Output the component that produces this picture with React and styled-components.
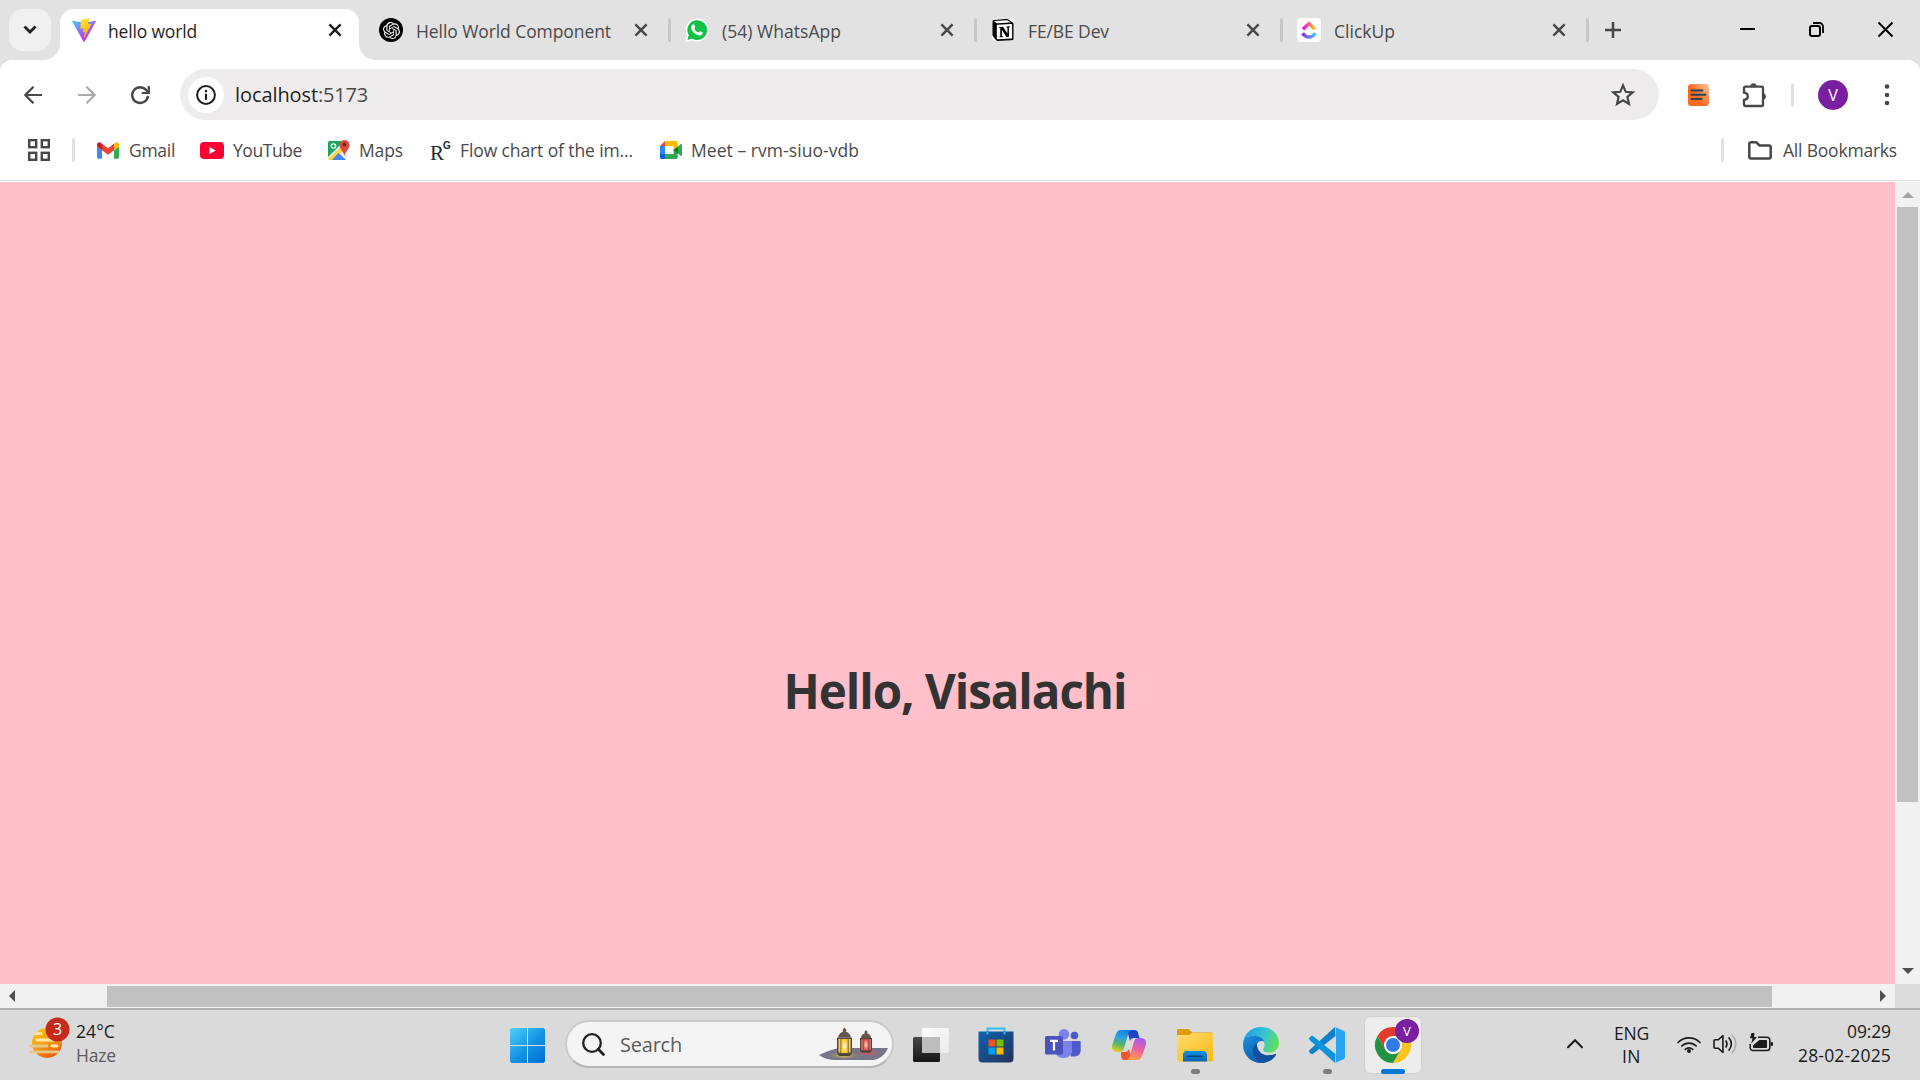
import React, { useLayoutEffect, useRef, useState } from "react";
import styled, { createGlobalStyle, css } from "styled-components";
import { SiOpenai, SiNotion } from "react-icons/si";

const GlobalStyle = createGlobalStyle`
  * { box-sizing: border-box; }
  html, body { margin: 0; padding: 0; overflow: hidden; }
  body { font-family: "Open Sans", "Noto Sans", sans-serif; background: #fff; }
  svg { display: block; flex: none; overflow: visible; }
`;

/* ---------- text fitted to a column width by tracking ---------- */

const Label = styled.span`
  display: block;
  flex: none;
  width: ${(p) => p.$w}px;
  font-size: ${(p) => p.$size || 17.5}px;
  line-height: ${(p) => p.$lh || 24}px;
  color: ${(p) => p.$color || "#4a4a4a"};
  white-space: nowrap;
`;

function FitLabel({ w, size, lh, color, children }) {
  const ref = useRef(null);
  const [spacing, setSpacing] = useState(0);
  useLayoutEffect(() => {
    const natural = ref.current.getBoundingClientRect().width;
    setSpacing((w - natural) / children.length);
  }, [w, children]);
  return (
    <Label $w={w} $size={size} $lh={lh} $color={color}>
      <span ref={ref} style={{ letterSpacing: spacing }}>{children}</span>
    </Label>
  );
}

/* ---------- browser window ---------- */

const Screen = styled.div`
  width: 1920px;
  height: 1080px;
  display: flex;
  flex-direction: column;
  overflow: hidden;
`;

const TabStrip = styled.div`
  height: 60px;
  flex: none;
  display: flex;
  background: #e2e2e2;
  padding-left: 9px;
`;

const TabSearch = styled.div`
  width: 42px;
  height: 42px;
  margin: 9px 9px 0 0;
  border-radius: 14px;
  background: #f0f0f0;
  display: flex;
  align-items: center;
  justify-content: center;
`;

const flare = css`
  content: "";
  position: absolute;
  bottom: 0;
  width: 16px;
  height: 16px;
`;

const Tab = styled.div`
  position: relative;
  width: ${(p) => (p.$active ? 299 : 306)}px;
  height: 51px;
  margin: 9px ${(p) => (p.$active ? 7 : 0)}px 0 0;
  padding: 0 0 9px ${(p) => (p.$active ? 12 : 13)}px;
  display: flex;
  align-items: center;
  background: ${(p) => (p.$active ? "#fff" : "transparent")};
  border-radius: 14px 14px 0 0;
  ${(p) =>
    p.$active &&
    css`
      &::before {
        ${flare}
        left: -16px;
        background: radial-gradient(circle at 0 0, transparent 15.5px, #fff 16px);
      }
      &::after {
        ${flare}
        right: -16px;
        background: radial-gradient(circle at 100% 0, transparent 15.5px, #fff 16px);
      }
    `}
`;

const Favicon = styled.div`
  width: 24px;
  height: 24px;
  flex: none;
  display: flex;
  align-items: center;
  justify-content: center;
  border-radius: ${(p) => (p.$round ? "50%" : p.$tile ? "4px" : 0)};
  background: ${(p) => (p.$round ? "#000" : p.$tile ? "#fff" : "transparent")};
  color: #fff;
`;

const TabTitle = styled.div`
  width: ${(p) => (p.$active ? 226.5 : 225.5)}px;
  flex: none;
  padding: 2px 0 0 ${(p) => (p.$active ? 12 : 13)}px;
`;

const CloseBox = styled.div`
  width: 24px;
  flex: none;
  display: flex;
  justify-content: center;
`;

const Divider = styled.div`
  width: 3px;
  height: 24px;
  flex: none;
  border-radius: 2px;
  background: ${(p) => p.$color || "#e2e2e2"};
  margin-left: ${(p) => p.$ml || 0}px;
`;

const NewTab = styled.div`
  width: 48px;
  height: 60px;
  display: flex;
  align-items: center;
  justify-content: center;
  margin-left: -1px;
`;

const WindowControls = styled.div`
  display: flex;
  align-items: center;
  height: 58px;
  margin-left: auto;
`;

const ControlButton = styled.div`
  width: 69px;
  display: flex;
  justify-content: center;
`;

const ToolbarBacking = styled.div`
  background: #e2e2e2;
  flex: none;
`;

const ChromePanel = styled.div`
  height: 122px;
  background: #fff;
  border-radius: 12px 12px 0 0;
  border-bottom: 1px solid #fff;
  display: flex;
  flex-direction: column;
`;

const Toolbar = styled.div`
  display: flex;
  align-items: center;
  height: 51px;
  flex: none;
  margin-top: 9px;
  padding-left: 21px;
`;

const NavButton = styled.div`
  width: 24px;
  margin-right: 30px;
  color: ${(p) => (p.$muted ? "#ababab" : "#474747")};
`;

const Omnibox = styled.div`
  width: 1479px;
  height: 51px;
  border-radius: 26px;
  background: #efeced;
  display: flex;
  align-items: center;
  margin-left: -3px;
  padding: 0 24px 0 8px;
`;

const InfoChip = styled.div`
  width: 36px;
  height: 36px;
  border-radius: 50%;
  background: #fff;
  display: flex;
  align-items: center;
  justify-content: center;
  margin-right: 11px;
`;

const Spacer = styled.div`
  flex: 1;
`;

const ToolbarActions = styled.div`
  display: flex;
  align-items: center;
`;

const Slot = styled.div`
  margin-left: ${(p) => p.$ml}px;
  flex: none;
`;

const Avatar = styled.div`
  width: ${(p) => p.$size}px;
  height: ${(p) => p.$size}px;
  border-radius: 50%;
  background: #7b1fa2;
  color: #fff;
  display: flex;
  align-items: center;
  justify-content: center;
  font-size: ${(p) => p.$font}px;
  font-weight: 400;
  line-height: 1;
`;

const BookmarkBar = styled.div`
  display: flex;
  align-items: center;
  height: 61px;
  flex: none;
  padding-left: 28px;
  border-bottom: 1px solid #dcdfde;
`;

const Bookmark = styled.div`
  display: flex;
  align-items: center;
  margin-left: ${(p) => p.$ml}px;
  gap: ${(p) => p.$gap}px;
`;

const BookmarkText = styled.div`
  padding-bottom: 1px;
`;

const RgMark = styled.div`
  display: flex;
  width: 20px;
  height: 22px;
  font-family: "Liberation Serif", serif;
  font-size: 21px;
  line-height: 28px;
  letter-spacing: -1px;
  color: #1c2b29;
  sup {
    font-size: 10px;
    line-height: 13px;
    font-family: "Liberation Sans", sans-serif;
    font-weight: 700;
    vertical-align: top;
  }
`;

/* ---------- page and scrollbars ---------- */

const Viewport = styled.div`
  height: 826px;
  flex: none;
  display: grid;
  grid-template-columns: 1895px 25px;
  grid-template-rows: 802px 24px;
`;

const Page = styled.main`
  background: #ffc0cb;
  display: flex;
  justify-content: center;
  padding: 476px 0 0 15px;
`;

const Heading = styled.h1`
  margin: 0;
  line-height: 66px;
  font-size: 47.5px;
  font-weight: 700;
  letter-spacing: ${(p) => p.$tracking}px;
  color: #333;
  white-space: nowrap;
`;

const VScroll = styled.div`
  background: #f1f1f1;
  display: flex;
  flex-direction: column;
  align-items: center;
  padding: 10px 0;
`;

const VThumb = styled.div`
  width: 21px;
  height: 595px;
  margin: 9px 0 auto;
  background: #c1c1c1;
`;

const HScroll = styled.div`
  background: #f1f1f1;
  display: flex;
  align-items: center;
  padding: 0 9px;
`;

const HThumb = styled.div`
  width: 1665px;
  height: 21px;
  margin: 0 auto 0 92px;
  background: #c1c1c1;
`;

const Corner = styled.div`
  background: #dcdcdc;
`;

/* ---------- taskbar ---------- */

const Taskbar = styled.footer`
  height: 72px;
  flex: none;
  border-top: 2px solid #b0b0b0;
  background: #dadada;
  display: flex;
`;

const Weather = styled.div`
  width: 494px;
  height: 70px;
  padding-left: 28px;
  display: flex;
`;

const WeatherIcon = styled.div`
  width: 48px;
  padding-top: 7px;
`;

const WeatherText = styled.div`
  padding-top: 9px;
`;

const AppCell = styled.div`
  width: 66px;
  height: 70px;
  flex: none;
  display: flex;
  flex-direction: column;
  align-items: center;
  padding-top: 6px;
`;

const AppTile = styled.div`
  position: relative;
  width: 58px;
  height: 58px;
  border-radius: 7px;
  display: flex;
  align-items: center;
  justify-content: center;
  border: ${(p) => (p.$active ? "1px solid #d0d0d0" : "1px solid transparent")};
  background: ${(p) => (p.$active ? "#ededed" : "transparent")};
`;

const Indicator = styled.div`
  position: absolute;
  bottom: -1px;
  left: 50%;
  width: ${(p) => (p.$wide ? 24 : 9)}px;
  height: 5px;
  margin-left: ${(p) => (p.$wide ? -12 : -4.5)}px;
  border-radius: 3px;
  background: ${(p) => (p.$wide ? "#0078d4" : "#7c7c7c")};
`;

const ProfileBadge = styled.div`
  position: absolute;
  right: 2px;
  top: 2px;
`;

const SearchBox = styled.div`
  width: 329px;
  height: 48px;
  margin: 10px 4px 0 5px;
  border: 2px solid #cbcbcb;
  border-bottom-color: #b5b5b5;
  border-radius: 24px;
  background: #f4f4f4;
  display: flex;
  align-items: center;
  padding-left: 15px;
  overflow: hidden;
`;

const SearchText = styled.div`
  margin-left: 15px;
  padding-top: 2px;
`;

const Tray = styled.div`
  display: flex;
  margin-left: auto;
  padding-right: 29px;
  height: 70px;
`;

const TrayItem = styled.div`
  margin-right: ${(p) => p.$mr}px;
  padding-top: ${(p) => p.$pt}px;
`;

const Stack = styled.div`
  display: flex;
  flex-direction: column;
  align-items: ${(p) => p.$align};
  padding-top: ${(p) => p.$pt}px;
  margin-right: ${(p) => p.$mr || 0}px;
`;

/* ---------- drawings ---------- */

const Svg = ({ w, h = w, vb, children }) => (
  <svg width={w} height={h} viewBox={vb || `0 0 ${w} ${h}`} fill="none">{children}</svg>
);

const CloseIcon = ({ color = "#474747", size = 12, sw = 2.4 }) => (
  <Svg w={size} vb="0 0 12 12"><path d="M.4.4l11.2 11.2M11.6.4L.4 11.6" stroke={color} strokeWidth={sw} /></Svg>
);

const ViteIcon = () => (
  <Svg w={24} vb="0 0 256 257">
    <defs>
      <linearGradient id="va" x1="0" y1="0" x2=".58" y2=".78"><stop offset="0" stopColor="#41D1FF" /><stop offset="1" stopColor="#BD34FE" /></linearGradient>
      <linearGradient id="vb" x1=".4" y1="0" x2=".5" y2="1"><stop offset="0" stopColor="#FFEA83" /><stop offset=".1" stopColor="#FFDD35" /><stop offset="1" stopColor="#FFA800" /></linearGradient>
    </defs>
    <path fill="url(#va)" d="M255.153 37.938L134.897 252.976c-2.483 4.44-8.862 4.466-11.382.048L.875 37.958c-2.746-4.814 1.371-10.646 6.827-9.67l120.385 21.517a6.537 6.537 0 0 0 2.322-.004l117.867-21.483c5.438-.991 9.574 4.796 6.877 9.62Z" />
    <path fill="url(#vb)" d="M185.432.063L96.44 17.501a3.268 3.268 0 0 0-2.634 3.014l-5.474 92.456a3.268 3.268 0 0 0 3.997 3.378l24.777-5.718c2.318-.535 4.413 1.507 3.936 3.838l-7.361 36.047c-.495 2.426 1.782 4.5 4.151 3.78l15.304-4.649c2.372-.72 4.652 1.36 4.15 3.788l-11.698 56.621c-.732 3.542 3.979 5.473 5.943 2.437l1.313-2.028l72.516-144.72c1.215-2.423-.88-5.186-3.54-4.672l-25.505 4.922c-2.396.462-4.435-1.77-3.759-4.114l16.646-57.705c.677-2.35-1.37-4.583-3.769-4.113Z" />
  </Svg>
);

const WhatsAppIcon = () => (
  <Svg w={24} vb="1 .5 23 23">
    <path d="M2.2 22.6L3.8 17A10.2 10.2 0 1 1 7.8 21Z" fill="#11c144" stroke="#fff" strokeWidth="1.5" strokeLinejoin="round" />
    <path d="M8.4 6.7c.5-.5 1.2-.3 1.5.3l.9 2c.2.5-.8 1.4-.9 1.8.9 1.8 2.2 3 4 3.7.6-.3 1.2-1.5 1.7-1.3l2.1 1c.5.3.4.9.1 1.5-.6 1.2-2.2 1.9-3.7 1.5-3.8-1-6.2-3.5-7.1-6.6-.4-1.5.4-3 1.4-3.9z" fill="#fff" />
  </Svg>
);

const ClickUpIcon = () => (
  <Svg w={24}>
    <defs>
      <linearGradient id="cu1" x1="0" x2="1"><stop stopColor="#ff02f0" /><stop offset="1" stopColor="#ffc800" /></linearGradient>
      <linearGradient id="cu2" x1="0" x2="1"><stop stopColor="#8930fd" /><stop offset="1" stopColor="#49ccf9" /></linearGradient>
    </defs>
    <path d="M6 11.200L12 5.600l6 5.600" stroke="url(#cu1)" strokeWidth="3.400" />
    <path d="M5.600 15.300c3.400 5 9.400 5 12.800 0" stroke="url(#cu2)" strokeWidth="3.400" />
  </Svg>
);

const BackIcon = () => (
  <Svg w={24}><path d="M21 12H4.500M12.500 3.800L4.300 12l8.200 8.200" stroke="currentColor" strokeWidth="2.200" /></Svg>
);
const ForwardIcon = () => (
  <Svg w={24}><path d="M3 12h16.500M11.500 3.800l8.200 8.200-8.200 8.200" stroke="currentColor" strokeWidth="2.200" /></Svg>
);
const ReloadIcon = () => (
  <Svg w={24}>
    <path d="M19 12.800A7.900 7.900 0 1 1 17.400 7.300L19 9" stroke="currentColor" strokeWidth="2.400" />
    <path d="M19.800 3v7h-7" stroke="currentColor" strokeWidth="2.200" />
  </Svg>
);

const AppsIcon = () => (
  <Svg w={22}>
    {[[1.2, 1.2], [13.8, 1.2], [1.2, 13.8], [13.8, 13.8]].map(([x, y]) => (
      <rect key={`${x}-${y}`} x={x} y={y} width="7" height="7" stroke="#474747" strokeWidth="2.400" />
    ))}
  </Svg>
);

const GmailIcon = () => (
  <Svg w={22} h={17} vb="52 42 88 66">
    <path fill="#4285f4" d="M58 108h14V74L52 59v43c0 3.320 2.690 6 6 6" />
    <path fill="#34a853" d="M120 108h14c3.320 0 6-2.690 6-6V59l-20 15" />
    <path fill="#fbbc04" d="M120 48v26l20-15v-8c0-7.420-8.470-11.650-14.400-7.200" />
    <path fill="#ea4335" d="M72 74V48l24 18 24-18v26L96 92" />
    <path fill="#c5221f" d="M52 51v8l20 15V48l-5.600-4.200c-5.940-4.450-14.400-.22-14.400 7.200" />
  </Svg>
);

const YouTubeIcon = () => (
  <Svg w={24} h={17}><rect width="24" height="17" rx="4" fill="#ff0033" /><path d="M9.500 5l6.300 3.500L9.500 12z" fill="#fff" /></Svg>
);

const MapsIcon = () => (
  <Svg w={22}>
    <defs><clipPath id="mp"><rect x="0" y="2" width="19" height="19" rx="2" /></clipPath></defs>
    <g clipPath="url(#mp)">
      <rect width="20" height="22" fill="#e8eaed" />
      <path d="M0 2h16L0 18z" fill="#1fa463" />
      <path d="M0 20L17 4l3 3L4 22H0z" fill="#fdd43c" />
      <path d="M3 22l7.500-8L19 22z" fill="#4285f4" />
    </g>
    <circle cx="5.500" cy="7" r="2.200" stroke="#fff" strokeWidth="1.200" />
    <path d="M16.500 17c-.5-4.500-5-6.400-5-11a5 5 0 0 1 10 0c0 4.600-4.500 6.500-5 11z" fill="#dd4b3e" />
    <circle cx="16.500" cy="5.500" r="1.900" fill="#7d1f17" />
  </Svg>
);

const MeetIcon = () => (
  <Svg w={22} h={18}>
    <path d="M5 0v5H0z" fill="#ea4335" />
    <path d="M5 0h11c1 0 1.800.8 1.800 1.800V7l-4.200 3V5H5z" fill="#ffba00" />
    <path d="M0 5h5v8H0z" fill="#2684fc" />
    <path d="M0 13h5v5H1.500C.7 18 0 17.300 0 16.500z" fill="#0066da" />
    <path d="M5 13h8.600V8l4.200 3v5.200c0 1-.8 1.800-1.800 1.800H5z" fill="#34a853" />
    <path d="M13.600 9L21 3c.500-.3 1 0 1 .6v10.800c0 .6-.5.9-1 .6z" fill="#34a853" />
    <path d="M13.600 9l4.400-3.600v7.200z" fill="#00832d" />
  </Svg>
);

const FolderIcon = () => (
  <Svg w={24} h={19}><path d="M1.300 3.300c0-1.100.9-2 2-2h5l3.200 3.200h9.200c1.100 0 2 .9 2 2v8.900c0 1.100-.9 2-2 2H3.300c-1.100 0-2-.9-2-2z" stroke="#474747" strokeWidth="2.500" /></Svg>
);

const StarIcon = () => (
  <Svg w={24} h={24}><path d="M12 2.300l2.700 6.500 7 .6-5.300 4.600 1.600 6.900-6-3.700L6 20.900 7.600 14 2.300 9.400l7-.6z" stroke="#474747" strokeWidth="2.200" /></Svg>
);

const NotesExtension = () => (
  <Svg w={21} h={22}>
    <defs><linearGradient id="ne" x1=".35" y1=".5" x2="1" y2="0"><stop stopColor="#fa6a1f" /><stop offset="1" stopColor="#fdc6a3" /></linearGradient></defs>
    <rect width="21" height="22" rx="3" fill="url(#ne)" />
    <path d="M3.500 6.500h11M3.500 10.700h14M3.500 15h10" stroke="#2c4354" strokeWidth="2" strokeLinecap="round" />
  </Svg>
);

const PuzzleIcon = () => (
  <Svg w={26} h={26}>
    <path d="M2 6.200c0-.9.600-1.500 1.500-1.500h16c.9 0 1.500.6 1.500 1.500V22.500c0 .9-.6 1.500-1.500 1.500h-16C2.600 24 2 23.400 2 22.500V18c2.800-.3 3.800-1.900 3.800-3.700S4.800 10.900 2 10.600z" stroke="#474747" strokeWidth="2.300" />
    <path d="M8.500 4.300a3 3 0 0 1 6 0zM21.500 11.300a3.200 3.200 0 0 1 0 6.200z" fill="#474747" />
  </Svg>
);

const HazeIcon = () => (
  <Svg w={42} h={44}>
    <defs><linearGradient id="hz" x1=".2" y1="0" x2=".7" y2="1"><stop stopColor="#fcc40c" /><stop offset=".5" stopColor="#f39c12" /><stop offset="1" stopColor="#e8590c" /></linearGradient></defs>
    <circle cx="19" cy="26" r="15" fill="url(#hz)" />
    <path d="M8 16.700h5M9 23h16M24 29h5" stroke="#ffe9a8" strokeWidth="2.800" strokeLinecap="round" />
    <path d="M2 29h17M2 34.800h28" stroke="#e5c88a" strokeWidth="2.800" strokeLinecap="round" />
    <circle cx="29.500" cy="12.500" r="12" fill="#c42b1c" />
    <text x="29.500" y="18" textAnchor="middle" fontSize="16" fill="#fff" fontFamily="Open Sans, sans-serif">3</text>
  </Svg>
);

const StartIcon = () => (
  <Svg w={35}>
    <defs><linearGradient id="st" gradientUnits="userSpaceOnUse" x1="0" y1="0" x2="32" y2="35"><stop stopColor="#4fd2fc" /><stop offset=".55" stopColor="#1593e4" /><stop offset="1" stopColor="#0071d4" /></linearGradient></defs>
    <path d="M1.500 0H17v17H0V1.500zM18 0h15.500L35 1.500V17H18zM0 18h17v17H1.500L0 33.500zM18 18h17v15.500L33.500 35H18z" fill="url(#st)" />
  </Svg>
);

const SearchGlass = () => (
  <Svg w={23}><circle cx="10" cy="10" r="8.800" stroke="#1f1f1f" strokeWidth="2.300" /><path d="M16.300 16.300l5.200 5.200" stroke="#1f1f1f" strokeWidth="2.800" strokeLinecap="round" /></Svg>
);

const Lantern = ({ x, y, s, glow, core }) => (
  <g transform={`translate(${x} ${y}) scale(${s})`}>
    <path d="M7.500 0l2 2.500-.6 1.700c3 .8 4.600 3 5 5.800H1.100c.4-2.800 2-5 5-5.800l-.6-1.700z" fill="#65564c" />
    <rect x="0" y="10" width="15" height="16" fill="#5a4636" />
    <rect x="1.500" y="11.500" width="2" height="13.500" fill={glow} />
    <rect x="4.200" y="11.500" width="6.600" height="14" fill={core} />
    <rect x="11.600" y="11.500" width="2" height="13.500" fill={glow} />
    <path d="M.5 26h14v1l-2 1.500h-10L.5 27z" fill="#514337" />
  </g>
);

const LanternArt = () => (
  <Svg w={73} h={34}>
    <defs>
      <radialGradient id="lg"><stop stopColor="#e7cc3c" /><stop offset="1" stopColor="#77758a" stopOpacity="0" /></radialGradient>
      <radialGradient id="lr"><stop stopColor="#e05560" /><stop offset="1" stopColor="#77758a" stopOpacity="0" /></radialGradient>
      <radialGradient id="cy"><stop stopColor="#fffbe0" /><stop offset="1" stopColor="#f9c42b" /></radialGradient>
      <radialGradient id="cr"><stop stopColor="#fbd9b0" /><stop offset="1" stopColor="#dc4d56" /></radialGradient>
    </defs>
    <path d="M0 28c6-2.500 12-6 22-7h47c-3 7-8 11-15 12H15C9 32.500 4 31 0 28z" fill="#77758a" />
    <ellipse cx="25" cy="28.500" rx="19" ry="4.500" fill="url(#lg)" />
    <ellipse cx="49" cy="26" rx="18" ry="4" fill="url(#lr)" />
    <Lantern x={18} y={0.5} s={1} glow="#fbd148" core="url(#cy)" />
    <Lantern x={41} y={3} s={0.8} glow="#e26a68" core="url(#cr)" />
  </Svg>
);

const TaskViewIcon = () => (
  <Svg w={36} h={34}>
    <defs>
      <linearGradient id="tv" x1="0" y1="0" x2="0" y2="1"><stop stopColor="#474747" /><stop offset="1" stopColor="#161616" /></linearGradient>
      <linearGradient id="tw" x1="0" y1="0" x2="1" y2="1"><stop stopColor="#fff" /><stop offset="1" stopColor="#ececec" /></linearGradient>
    </defs>
    <rect x="0" y="9" width="27" height="25" rx="1.500" fill="url(#tv)" />
    <rect x="9" y="0" width="27" height="25" rx="1" fill="url(#tw)" opacity=".92" />
    <path d="M9 9h18v16H9z" fill="#bdbdbd" />
  </Svg>
);

const StoreIcon = () => (
  <Svg w={36} h={35} vb="0.500 0.500 36 35">
    <defs><linearGradient id="ms" x1="0" y1="0" x2="1" y2="1"><stop stopColor="#0e62b0" /><stop offset="1" stopColor="#25335a" /></linearGradient></defs>
    <path d="M9 6V1h17v5" stroke="#2fc0ee" strokeWidth="2" />
    <path d="M0 4h35v27a4 4 0 0 1-4 4H4a4 4 0 0 1-4-4z" fill="url(#ms)" />
    <path d="M9 7V4M26 7V4" stroke="#2fb0e6" strokeWidth="2" />
    <path d="M10 12h7v7h-7z" fill="#f25022" /><path d="M18 12h7v7h-7z" fill="#7fba00" />
    <path d="M10 20h7v7h-7z" fill="#00a4ef" /><path d="M18 20h7v7h-7z" fill="#ffb900" />
  </Svg>
);

const TeamsIcon = () => (
  <Svg w={36} h={32}>
    <circle cx="29.500" cy="6.500" r="3.800" fill="#5059c9" />
    <path d="M22 12h12.500c.8 0 1.200.5 1.200 1.200v8.300a6 6 0 0 1-6 6H26z" fill="#5059c9" />
    <circle cx="19" cy="5.300" r="5.300" fill="#7b83eb" />
    <path d="M10 12h15.500c1 0 1.500.6 1.500 1.500V23a9 9 0 0 1-17 0z" fill="#7b83eb" />
    <rect x="0" y="7" width="18" height="18.500" rx="1.500" fill="#4b53bc" />
    <path d="M5 11.800h8M9 11.800V21.500" stroke="#fff" strokeWidth="2.200" />
  </Svg>
);

const CopilotIcon = () => (
  <Svg w={34} h={30}>
    <defs>
      <linearGradient id="c1" x1=".5" y1="0" x2=".3" y2="1"><stop stopColor="#1583e8" /><stop offset=".35" stopColor="#2aa6d8" /><stop offset=".65" stopColor="#58b368" /><stop offset="1" stopColor="#f1cf1c" /></linearGradient>
      <linearGradient id="c2" x1=".7" y1="0" x2=".4" y2="1"><stop stopColor="#a35bf0" /><stop offset=".5" stopColor="#ea5fa2" /><stop offset="1" stopColor="#fba04e" /></linearGradient>
    </defs>
    <path d="M15 0h7.500c2 0 3 .9 3.500 2.700L27.500 8H22c-2 0-3.500 1-4 3z" fill="#1a45c8" />
    <path d="M9 22h4c2 0 3-.9 3.500-3l4 9c-.6 1.400-1.600 2-3.500 2h-4.500c-2 0-2.800-.9-3.300-2.700z" fill="#f0562f" />
    <path d="M9.500 0H19c-1.500.8-2.200 2-2.800 4L12 18.500c-.7 2.400-1.800 3.500-4.500 3.500H5c-4 0-6-3-4.600-7.500L3.800 4.500C4.900 1.300 6.500 0 9.500 0z" fill="url(#c1)" />
    <path d="M24.500 30H15c1.500-.8 2.200-2 2.800-4L22 11.500C22.700 9.100 23.800 8 26.500 8H29c4 0 6 3 4.600 7.500l-3.400 10c-1.100 3.200-2.700 4.500-5.700 4.500z" fill="url(#c2)" />
  </Svg>
);

const ExplorerIcon = () => (
  <Svg w={36} h={33}>
    <defs>
      <linearGradient id="ex" x1="0" y1="0" x2="1" y2="1"><stop stopColor="#ffdc6e" /><stop offset="1" stopColor="#fbb916" /></linearGradient>
      <linearGradient id="ey" x1="0" y1="0" x2="0" y2="1"><stop stopColor="#1393e0" /><stop offset="1" stopColor="#0b62b3" /></linearGradient>
    </defs>
    <path d="M0 1.500C0 .6.600 0 1.500 0h9.300c.7 0 1.200.2 1.700.7L15 3.500h19.500c.9 0 1.500.6 1.500 1.500v10H0z" fill="#dc9b08" />
    <path d="M0 7.500C0 6.600.6 6 1.500 6h10L15 4h19.500c.9 0 1.500.6 1.500 1.500v25c0 1.300-.7 2-2 2H2c-1.300 0-2-.7-2-2z" fill="url(#ex)" />
    <path d="M6 32.500V26c0-2.400 1.300-4 4-4h16c2.700 0 4 1.600 4 4v6.500z" fill="url(#ey)" />
    <path d="M11 27.300h14" stroke="#08467f" strokeWidth="1.600" strokeLinecap="round" />
  </Svg>
);

const EdgeIcon = () => (
  <Svg w={36} h={36}>
    <defs>
      <linearGradient id="e1" x1="0" y1=".3" x2="1" y2=".6"><stop stopColor="#1b9de2" /><stop offset=".5" stopColor="#35c1d8" /><stop offset="1" stopColor="#63e258" /></linearGradient>
      <linearGradient id="e2" x1="0" y1="0" x2=".6" y2="1"><stop stopColor="#1a8fdc" /><stop offset="1" stopColor="#0b5cab" /></linearGradient>
    </defs>
    <path d="M0 17C.5 7 8 0 18 0c11 0 18 7.500 18 16 0 6-4.500 9.500-9.500 9.500-4 0-6.500-1.300-6.500-2.800 0-1 1.600-1.900 1.600-4.700C21.600 12 16 8.500 10 8.500 5.500 8.500 1.500 12 0 17z" fill="url(#e1)" />
    <path d="M0 18C0 12 4.500 8.500 10.500 8.500c5 0 9.500 2.500 10.700 6-4.700-1.500-8.200 1.500-8.200 6.500 0 8 7 12.500 13 11.500C23.700 35 21 36 18 36 8 36 0 28 0 18z" fill="url(#e2)" />
    <path d="M13.700 16.500C11 18 10 21 10 24c0 6 4 11 10 12 5.500-.3 10.500-3.500 13-8 .5-1-.4-1.500-1.200-1.100-8 3.600-17.500.4-18.100-10.400z" fill="#10509c" />
  </Svg>
);

const CodeIcon = () => (
  <Svg w={36} h={36}>
    <path d="M26.500 9L4.200 26.800c-.7.600-1.600.6-2.200 0L.6 25.400c-.8-.7-.8-1.700 0-2.400L26 0z" fill="#0f80cc" />
    <path d="M26.500 27L4.200 9.200c-.7-.6-1.600-.6-2.200 0L.6 10.600c-.8.700-.8 1.700 0 2.400L26 36z" fill="#0b93dc" />
    <path d="M26 0l8.500 3.700c1 .5 1.500 1.200 1.500 2.200v24.200c0 1-.5 1.700-1.500 2.200L26 36c1-.7 1-1.500 1-2.500v-31C27 1.500 27 .7 26 0z" fill="#27a4f2" />
  </Svg>
);

const ChromeIcon = () => (
  <Svg w={36} h={36}>
    <path d="M2.410 9L10.200 22.500 18 9h15.590A18 18 0 0 0 2.410 9z" fill="#e33b2e" />
    <path d="M18 36l7.800-13.500A9 9 0 0 0 18 9h15.590A18 18 0 0 1 18 36z" fill="#fcc31e" />
    <path d="M18 36A18 18 0 0 1 2.410 9L10.200 22.500A9 9 0 0 0 25.800 22.500z" fill="#229342" />
    <circle cx="18" cy="18" r="9" fill="#fff" />
    <circle cx="18" cy="18" r="7" fill="#2f7bea" />
  </Svg>
);

const WifiIcon = () => (
  <Svg w={24} h={18}>
    <path d="M1 7.500a15.500 15.500 0 0 1 22 0M4.800 11a10.300 10.300 0 0 1 14.400 0M8.300 14.300a5.300 5.300 0 0 1 7.400 0" stroke="#1b1b1b" strokeWidth="1.700" strokeLinecap="round" />
    <circle cx="12" cy="16" r="2" fill="#1b1b1b" />
  </Svg>
);

const SpeakerIcon = () => (
  <Svg w={24} h={20}>
    <path d="M1 6.800c0-.7.400-1 1-1h3.200l4.700-4.300v17l-4.700-4.300H2c-.6 0-1-.4-1-1z" stroke="#1b1b1b" strokeWidth="1.600" strokeLinejoin="round" />
    <path d="M13 7c1.300 2 1.300 4 0 6M16 3.800c3 4 3 8.400 0 12.400" stroke="#1b1b1b" strokeWidth="1.600" strokeLinecap="round" />
    <path d="M19 1c5 5.500 5 12.500 0 18" stroke="#ababab" strokeWidth="1.500" strokeLinecap="round" />
  </Svg>
);

const BatteryIcon = () => (
  <Svg w={24} h={19}>
    <path d="M9 4.200h9c1.700 0 2.800 1.100 2.800 2.800v7.700c0 1.700-1.100 2.800-2.800 2.800H4c-1.700 0-2.800-1.100-2.800-2.800V11" stroke="#1b1b1b" strokeWidth="1.500" />
    <path d="M10.500 7H17c.6 0 1 .4 1 1v6c0 .6-.4 1-1 1H5c-.6 0-1-.4-1-1v-1.500L8 9z" fill="#1b1b1b" />
    <path d="M21.500 8.700l2.500.8v3l-2.500.8z" fill="#1b1b1b" />
    <path d="M5.500 0h-3L1 5.200h2.500L2.300 10.500 8 4H5z" fill="#1b1b1b" />
  </Svg>
);

/* ---------- data ---------- */

const tabs = [
  { title: "hello world", w: 89, icon: <ViteIcon />, active: true },
  { title: "Hello World Component", w: 195, icon: <SiOpenai size={17} />, round: true, divider: true },
  { title: "(54) WhatsApp", w: 119, icon: <WhatsAppIcon />, divider: true },
  { title: "FE/BE Dev", w: 81, icon: <SiNotion size={22} color="#000" style={{ background: "#fff", borderRadius: 4 }} />, divider: true },
  { title: "ClickUp", w: 61, icon: <ClickUpIcon />, tile: true, divider: true },
];

const bookmarks = [
  { title: "Gmail", w: 46, ml: 22, gap: 10, icon: <GmailIcon /> },
  { title: "YouTube", w: 69, ml: 25, gap: 9, icon: <YouTubeIcon /> },
  { title: "Maps", w: 44, ml: 26, gap: 9, icon: <MapsIcon /> },
  { title: "Flow chart of the im...", w: 173, ml: 27, gap: 10, icon: <RgMark>R<sup>G</sup></RgMark> },
  { title: "Meet – rvm-siuo-vdb", w: 168, ml: 27, gap: 9, icon: <MeetIcon /> },
];

const apps = [
  { id: "view", icon: <TaskViewIcon /> },
  { id: "store", icon: <StoreIcon /> },
  { id: "teams", icon: <TeamsIcon /> },
  { id: "copilot", icon: <CopilotIcon /> },
  { id: "files", icon: <ExplorerIcon />, running: true },
  { id: "edge", icon: <EdgeIcon /> },
  { id: "code", icon: <CodeIcon />, running: true },
  { id: "chrome", icon: <ChromeIcon />, running: true, active: true },
];

export default function App() {
  return (
    <Screen>
      <GlobalStyle />
      <TabStrip>
        <TabSearch>
          <Svg w={14} h={10}><path d="M1.500 1.500L7 7l5.500-5.500" stroke="#1f1f1f" strokeWidth="2.800" /></Svg>
        </TabSearch>
        {tabs.map((t) => (
          <Tab key={t.title} $active={t.active}>
            <Favicon $round={t.round} $tile={t.tile}>{t.icon}</Favicon>
            <TabTitle $active={t.active}>
              <FitLabel w={t.w} color={t.active ? "#1f1f1f" : undefined}>{t.title}</FitLabel>
            </TabTitle>
            <CloseBox><CloseIcon color={t.active ? "#1f1f1f" : "#474747"} /></CloseBox>
            {t.divider && <Divider $color="#c6c6c6" $ml={15.5} />}
          </Tab>
        ))}
        <NewTab>
          <Svg w={16}><path d="M8 0v16M0 8h16" stroke="#474747" strokeWidth="2.500" /></Svg>
        </NewTab>
        <WindowControls>
          <ControlButton><Svg w={15} h={2}><path d="M0 1h15" stroke="#000" strokeWidth="2" /></Svg></ControlButton>
          <ControlButton>
            <Svg w={15}>
              <rect x="1" y="4" width="10" height="10" rx="2" stroke="#000" strokeWidth="2" />
              <path d="M4 1h6.500A3.500 3.500 0 0 1 14 4.500V11" stroke="#000" strokeWidth="1.800" />
            </Svg>
          </ControlButton>
          <ControlButton><CloseIcon color="#000" size={15} sw={1.5} /></ControlButton>
        </WindowControls>
      </TabStrip>

      <ToolbarBacking>
        <ChromePanel>
          <Toolbar>
            <NavButton><BackIcon /></NavButton>
            <NavButton $muted><ForwardIcon /></NavButton>
            <NavButton><ReloadIcon /></NavButton>
            <Omnibox>
              <InfoChip>
                <Svg w={20}>
                  <circle cx="10" cy="10" r="8.900" stroke="#1f1f1f" strokeWidth="2" />
                  <path d="M10 8.800v6M10 5v2.300" stroke="#1f1f1f" strokeWidth="2.200" />
                </Svg>
              </InfoChip>
              <FitLabel w={83} size={20} color="#1f1f1f">localhost</FitLabel>
              <FitLabel w={50} size={20}>:5173</FitLabel>
              <Spacer />
              <StarIcon />
            </Omnibox>
            <ToolbarActions>
              <Slot $ml={29}><NotesExtension /></Slot>
              <Slot $ml={33}><PuzzleIcon /></Slot>
              <Divider $ml={23} />
              <Slot $ml={24}><Avatar $size={30} $font={16}>V</Avatar></Slot>
              <Slot $ml={36}>
                <Svg w={6} h={24}>
                  {[3.5, 12, 20].map((y) => <circle key={y} cx="3" cy={y} r="2.300" fill="#474747" />)}
                </Svg>
              </Slot>
            </ToolbarActions>
          </Toolbar>
          <BookmarkBar>
            <AppsIcon />
            <Divider $ml={22} />
            {bookmarks.map((b) => (
              <Bookmark key={b.title} $ml={b.ml} $gap={b.gap}>
                {b.icon}
                <BookmarkText><FitLabel w={b.w}>{b.title}</FitLabel></BookmarkText>
              </Bookmark>
            ))}
            <Divider $ml={862} />
            <Bookmark $ml={24} $gap={11}>
              <FolderIcon />
              <BookmarkText><FitLabel w={114}>All Bookmarks</FitLabel></BookmarkText>
            </Bookmark>
          </BookmarkBar>
        </ChromePanel>
      </ToolbarBacking>

      <Viewport>
        <Page><Heading $tracking={-1.05}>Hello, Visalachi</Heading></Page>
        <VScroll>
          <Svg w={12} h={6}><path d="M0 6l6-6 6 6z" fill="#a3a3a3" /></Svg>
          <VThumb />
          <Svg w={12} h={6}><path d="M0 0l6 6 6-6z" fill="#505050" /></Svg>
        </VScroll>
        <HScroll>
          <Svg w={6} h={12}><path d="M6 0L0 6l6 6z" fill="#505050" /></Svg>
          <HThumb />
          <Svg w={6} h={12}><path d="M0 0l6 6-6 6z" fill="#505050" /></Svg>
        </HScroll>
        <Corner />
      </Viewport>

      <Taskbar>
        <Weather>
          <WeatherIcon><HazeIcon /></WeatherIcon>
          <WeatherText>
            <FitLabel w={39} color="#1b1b1b">24°C</FitLabel>
            <FitLabel w={40} color="#5c5c5c">Haze</FitLabel>
          </WeatherText>
        </Weather>
        <AppCell><AppTile><StartIcon /></AppTile></AppCell>
        <SearchBox>
          <SearchGlass />
          <SearchText><FitLabel w={62} size={20} color="#5c5c5c">Search</FitLabel></SearchText>
          <Slot $ml={137}><LanternArt /></Slot>
        </SearchBox>
        {apps.map((a) => (
          <AppCell key={a.id}>
            <AppTile $active={a.active}>
              {a.icon}
              {a.active && <ProfileBadge><Avatar $size={24} $font={13}>V</Avatar></ProfileBadge>}
              {a.running && <Indicator $wide={a.active} />}
            </AppTile>
          </AppCell>
        ))}
        <Tray>
          <TrayItem $mr={31} $pt={29}>
            <Svg w={16} h={9}><path d="M1 8.200L8 1.200l7 7" stroke="#1b1b1b" strokeWidth="2" strokeLinecap="round" /></Svg>
          </TrayItem>
          <Stack $align="center" $pt={12} $mr={28}>
            <FitLabel w={35} lh={23} color="#1b1b1b">ENG</FitLabel>
            <FitLabel w={19} lh={23} color="#1b1b1b">IN</FitLabel>
          </Stack>
          <TrayItem $mr={12} $pt={25}><WifiIcon /></TrayItem>
          <TrayItem $mr={12} $pt={24}><SpeakerIcon /></TrayItem>
          <TrayItem $mr={25} $pt={23}><BatteryIcon /></TrayItem>
          <Stack $align="flex-end" $pt={9}>
            <FitLabel w={44} color="#1b1b1b">09:29</FitLabel>
            <FitLabel w={93} color="#1b1b1b">28-02-2025</FitLabel>
          </Stack>
        </Tray>
      </Taskbar>
    </Screen>
  );
}
